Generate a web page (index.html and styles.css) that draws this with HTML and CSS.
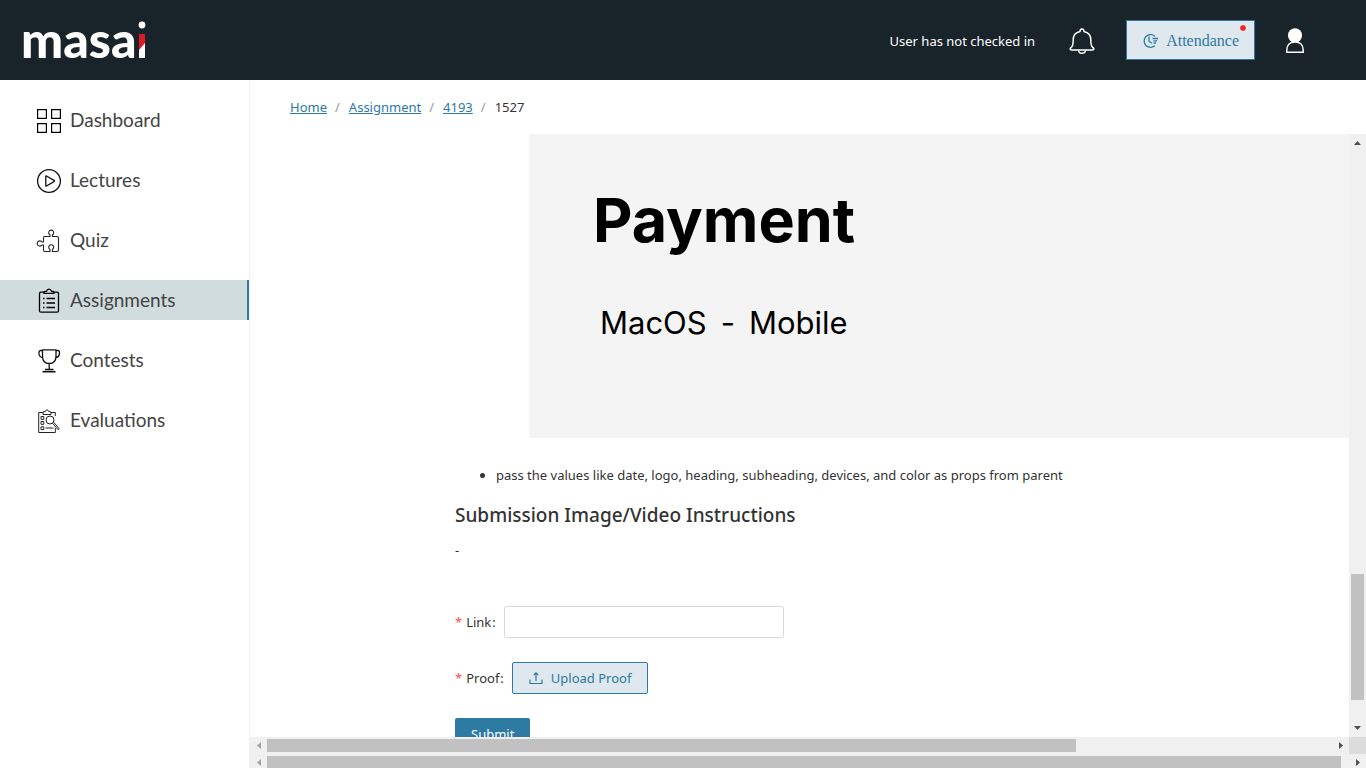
FILE: index.html
```
<!DOCTYPE html>
<html lang="en">
<head>
<meta charset="utf-8">
<meta name="viewport" content="width=device-width, initial-scale=1">
<title>Masai - Assignment</title>
<link rel="stylesheet" href="styles.css">
</head>
<body>
<div class="app">
  <header class="topbar">
    <a class="logo" href="#" aria-label="masai">
      <svg width="130" height="60" viewBox="0 0 130 60">
        <text class="logo-text" x="1" y="48">masa</text>
        <circle cx="122" cy="15" r="3.400" fill="#fff"/>
        <path d="M119 24h6v24h-6z" fill="#fff"/>
        <path d="M119 24h6v9l-6 7z" fill="#dc1a22"/>
      </svg>
    </a>
    <div class="top-actions">
      <span class="check-status">User has not checked in</span>
      <button class="icon-button" type="button" aria-label="Notifications">
        <svg width="26" height="28" viewBox="0 0 26 28" fill="none" stroke="#fff" stroke-width="1.500" stroke-linejoin="round">
          <path d="M11 4.500C11 1 15 1 15 4.500C20 5.500 21.800 9 21.800 13C21.800 17 22.300 19.500 23.800 20.500C25.500 21.500 25 23 23.500 23H2.500C1 23 .5 21.500 2.200 20.500C3.700 19.500 4.200 17 4.200 13C4.200 9 6 5.500 11 4.500Z"/>
          <path d="M9.500 23.500C10 27.300 16 27.300 16.500 23.500"/>
        </svg>
      </button>
      <button class="attendance" type="button">
        <svg width="16" height="16" viewBox="0 0 16 16" fill="none" stroke="currentColor" stroke-width="1.300">
          <path d="M12.800 3.200A6.400 6.400 0 1 0 12.800 12.800M7 3.500V8.200L10 10.300M10.500 5.500H16M11.500 7.800H15M11.500 10H14"/>
        </svg>
        <span>Attendance</span>
        <i class="dot"></i>
      </button>
      <button class="icon-button" type="button" aria-label="Profile">
        <svg width="18" height="26" viewBox="0 0 18 26">
          <ellipse cx="9" cy="7.500" rx="7" ry="7.300" fill="#fff"/>
          <path d="M.8 24.200V22C.8 17 4 14 9 14S17.200 17 17.200 22V24.200Z" fill="#19232a" stroke="#fff" stroke-width="1.500"/>
        </svg>
      </button>
    </div>
  </header>

  <div class="body">
    <nav class="sidebar">
      <a class="nav-item" href="#">
        <svg width="26" height="26" viewBox="0 0 26 26" fill="none" stroke="#000" stroke-width="1.200"><path d="M1.600 1.600h8.800v8.800H1.600zM15.600 1.600h8.800v8.800h-8.800zM1.600 15.600h8.800v8.800H1.600zM15.600 15.600h8.800v8.800h-8.800z"/></svg>
        <span>Dashboard</span>
      </a>
      <a class="nav-item" href="#">
        <svg width="26" height="26" viewBox="0 0 26 26" fill="none" stroke="#111" stroke-width="1.300" stroke-linejoin="round"><circle cx="13" cy="13" r="11.400"/><path d="M9.800 8.300V17.700Q9.800 18.400 10.500 18L18 13.600Q18.900 13 18 12.400L10.500 8Q9.800 7.600 9.800 8.300Z"/></svg>
        <span>Lectures</span>
      </a>
      <a class="nav-item" href="#">
        <svg width="26" height="26" viewBox="0 0 26 26" fill="none" stroke="#222" stroke-width="1.100" stroke-linejoin="round"><path d="M8.500 8.500H14V6.800A2.500 2.500 0 1 1 16.400 6.800V8.500H20.800Q22.500 8.500 22.500 10V22Q22.500 23.500 20.800 23.500H16.400V21.400A2.500 2.500 0 1 0 14 21.400V23.500H9Q7.500 23.500 7.500 22V17H5.900A2.600 2.600 0 1 1 5.900 14H7.500V10Q7.500 8.500 8.500 8.500Z"/></svg>
        <span>Quiz</span>
      </a>
      <a class="nav-item active" href="#" aria-current="page">
        <svg width="26" height="26" viewBox="0 0 26 26" fill="none" stroke="#000" stroke-width="1.300" stroke-linejoin="round"><path d="M8 4.200H5Q3.500 4.200 3.500 5.700V22.700Q3.500 24.200 5 24.200H21Q22.500 24.200 22.500 22.700V5.700Q22.500 4.200 21 4.200H18M8 4.200Q8 3.400 9.500 3.400H10.500Q11 1.200 13 1.200T15.500 3.400H16.500Q18 3.400 18 4.200V5.400H8Z"/><path d="M7 10.500h1.500M10.500 10.500h8.500M7 15h1.500M10.500 15h8.500M7 19.500h1.500M10.500 19.500h8.500"/></svg>
        <span>Assignments</span>
      </a>
      <a class="nav-item" href="#">
        <svg width="26" height="26" viewBox="0 0 26 26" fill="none" stroke="#111" stroke-width="1.300" stroke-linejoin="round"><path d="M6.500 1.800H20V8C20 12.500 17.500 15.500 13.200 15.500S6.500 12.500 6.500 8ZM6.500 2.500H4.500C2 2.500 2.300 9.500 6.800 9.500M20 2.500H22C24.500 2.500 24 9.500 19.700 9.500M13.200 15.500V21.500M9 21.500h8.500"/><path d="M6.500 23.700h13" stroke-width="1.600"/></svg>
        <span>Contests</span>
      </a>
      <a class="nav-item" href="#">
        <svg width="26" height="26" viewBox="0 0 26 26" fill="none" stroke="#222" stroke-width="1"><path d="M7 4.500H2.700V24.500H19.300V20M19.300 8V4.500H15M7 6.500V4L9.500 3.300Q11 0 12.500 3.300L15 4V6.500ZM5 8.500h2.800v2.800H5zM5 13.500h2.800v2.800H5zM5 18.800h2.800v2.800H5zM9.500 20h8"/><circle cx="14" cy="12" r="4"/><path d="M16.500 15.200L22 21.700L23.200 20.700L17.800 14.400"/></svg>
        <span>Evaluations</span>
      </a>
    </nav>

    <main class="main">
      <nav class="breadcrumb" aria-label="Breadcrumb">
        <a href="#">Home</a><span class="sep">/</span><a href="#">Assignment</a><span class="sep">/</span><a href="#">4193</a><span class="sep">/</span><span>1527</span>
      </nav>
      <div class="pane">
        <div class="viewport">
          <div class="banner">
            <div class="banner-title">Payment</div>
            <div class="banner-sub"><span>MacOS</span><span>-</span><span>Mobile</span></div>
          </div>
          <article class="details">
            <ul class="notes"><li>pass the values like date, logo, heading, subheading, devices, and color as props from parent</li></ul>
            <h2 class="heading">Submission Image/Video Instructions</h2>
            <p class="dash">-</p>
            <form class="form">
              <div class="field">
                <label for="link"><b class="req">*</b>Link<span class="colon">:</span></label>
                <input id="link" class="link-input" type="text">
              </div>
              <div class="field">
                <label for="proof"><b class="req">*</b>Proof<span class="colon">:</span></label>
                <button id="proof" class="upload" type="button">
                  <svg width="14" height="14" viewBox="0 0 14 14" fill="none" stroke="currentColor" stroke-width="1.200"><path d="M1 8.500V12.500H13V8.500M7 10V2M4.800 4L7 1.800L9.200 4"/></svg>
                  <span>Upload Proof</span>
                </button>
              </div>
              <button class="submit" type="submit">Submit</button>
            </form>
          </article>
        </div>
        <div class="vbar">
          <svg width="17" height="17" viewBox="0 0 17 17"><path d="M5 11h7L8.500 7z" fill="#505050"/></svg>
          <div class="vtrack"><div class="vthumb"></div></div>
          <svg width="17" height="17" viewBox="0 0 17 17"><path d="M5 6h7L8.500 10z" fill="#505050"/></svg>
        </div>
        <div class="hbar">
          <svg width="17" height="17" viewBox="0 0 17 17"><path d="M11 5v7L7 8.500z" fill="#a3a3a3"/></svg>
          <div class="htrack"><div class="hthumb"></div></div>
          <svg width="17" height="17" viewBox="0 0 17 17"><path d="M7 5v7l4-3.500z" fill="#505050"/></svg>
        </div>
        <div class="corner"></div>
      </div>
      <div class="hbar outer">
        <svg width="17" height="17" viewBox="0 0 17 17"><path d="M11 5v7L7 8.500z" fill="#a3a3a3"/></svg>
        <div class="htrack"><div class="hthumb wide"></div></div>
        <svg width="17" height="17" viewBox="0 0 17 17"><path d="M7 5v7l4-3.500z" fill="#505050"/></svg>
      </div>
    </main>
  </div>
</div>
</body>
</html>
```
FILE: styles.css
```
* { box-sizing: border-box; }
body {
  margin: 0;
  font-family: "Noto Sans", "Open Sans", sans-serif;
  font-size: 13px;
  line-height: 22px;
  color: #333;
  background: #fff;
}
button, input { font: inherit; }
svg { display: block; flex: none; }
.app { display: flex; flex-direction: column; height: 100vh; overflow: hidden; }

.topbar {
  display: flex;
  align-items: center;
  justify-content: space-between;
  flex: none;
  height: 80px;
  padding: 0 62px 0 20px;
  background: #19232a;
  color: #fff;
}
.logo-text { font: 900 50px Lato, sans-serif; fill: #fff; }
.top-actions { display: flex; align-items: center; }
.check-status { margin-right: 34px; padding-top: 2px; }
.icon-button { padding: 2px 0 0; border: 0; background: none; }
.attendance {
  position: relative;
  display: flex;
  align-items: center;
  gap: 8px;
  height: 40px;
  margin: 0 31px;
  padding: 2px 15px 0;
  border: 1px solid #2d7aa3;
  background: #dfe8ee;
  color: #2d7aa3;
  font: 16px/24px "Liberation Serif", serif;
}
.dot {
  position: absolute;
  top: 3px;
  right: 7px;
  width: 8px;
  height: 8px;
  border: 1px solid #fff;
  border-radius: 50%;
  background: #e02b2b;
}

.body { display: flex; flex: 1; min-height: 0; }
.sidebar {
  display: flex;
  flex-direction: column;
  gap: 20px;
  flex: none;
  width: 250px;
  padding-top: 20px;
  border-right: 1px solid #f0f0f5;
}
.nav-item {
  display: flex;
  align-items: center;
  gap: 8px;
  height: 40px;
  padding-left: 36px;
  color: #444;
  font: 19px/24px Lato, sans-serif;
  text-decoration: none;
}
.nav-item svg { margin-top: 2px; }
.nav-item.active { background: #d0dcde; border-right: 2px solid #2d7aa3; }

.main { display: flex; flex-direction: column; flex: 1; min-width: 0; }
.breadcrumb { flex: none; height: 54px; padding: 16px 0 0 40px; }
.breadcrumb a { color: #2d7aa3; text-decoration: underline; }
.sep { margin: 0 9px 0 8px; color: #999; }
.pane {
  display: grid;
  grid-template-columns: minmax(0, 1fr) 17px;
  grid-template-rows: minmax(0, 1fr) 17px;
  flex: 1;
  min-height: 0;
}
.viewport { overflow: hidden; }
.banner {
  height: 304px;
  margin-left: 279px;
  padding: 46px 64px;
  background: #f4f4f4;
  color: #000;
  font-family: Inter, sans-serif;
}
.banner-title { font-size: 61px; font-weight: 700; line-height: 80px; }
.banner-sub { display: flex; gap: 14px; margin: 43px 0 0 7px; font-size: 31px; line-height: 40px; }
.details { padding: 26px 0 0 205px; }
.notes { margin: 0; padding-left: 41px; }
.heading { margin: 17px 0 12px; font-size: 19px; font-weight: 500; line-height: 24px; }
.dash { margin: 0; }
.form { padding-top: 45px; }
.field { display: flex; align-items: center; gap: 8px; height: 32px; margin-bottom: 24px; }
.field label { display: flex; align-items: center; }
.req { margin-right: 4px; color: #ff4d4f; font-weight: 400; }
.colon { margin-left: 1px; }
.link-input { width: 280px; height: 32px; padding: 4px 11px; border: 1px solid #d9d9d9; border-radius: 2px; }
.upload {
  display: flex;
  align-items: center;
  gap: 8px;
  height: 32px;
  padding: 0 16px;
  border: 1px solid #2d7aa3;
  border-radius: 2px;
  background: #dfe8ee;
  color: #2d7aa3;
}
.submit { height: 32px; padding: 0 16px; border: 0; border-radius: 2px; background: #2d7aa3; color: #fff; }

.vbar { display: flex; flex-direction: column; background: #f0f0f0; }
.vtrack { flex: 1; display: flex; flex-direction: column; justify-content: flex-end; padding: 0 2px 20px; }
.vthumb { height: 23%; background: #c1c1c1; }
.hbar { display: flex; height: 17px; background: #f0f0f0; }
.htrack { flex: 1; padding: 2px 0; }
.hthumb { width: 76%; height: 13px; background: #c1c1c1; }
.corner { background: #dcdcdc; }
.outer { flex: none; height: 14px; overflow: hidden; }
.hthumb.wide { width: calc(100% - 8px); }
```
